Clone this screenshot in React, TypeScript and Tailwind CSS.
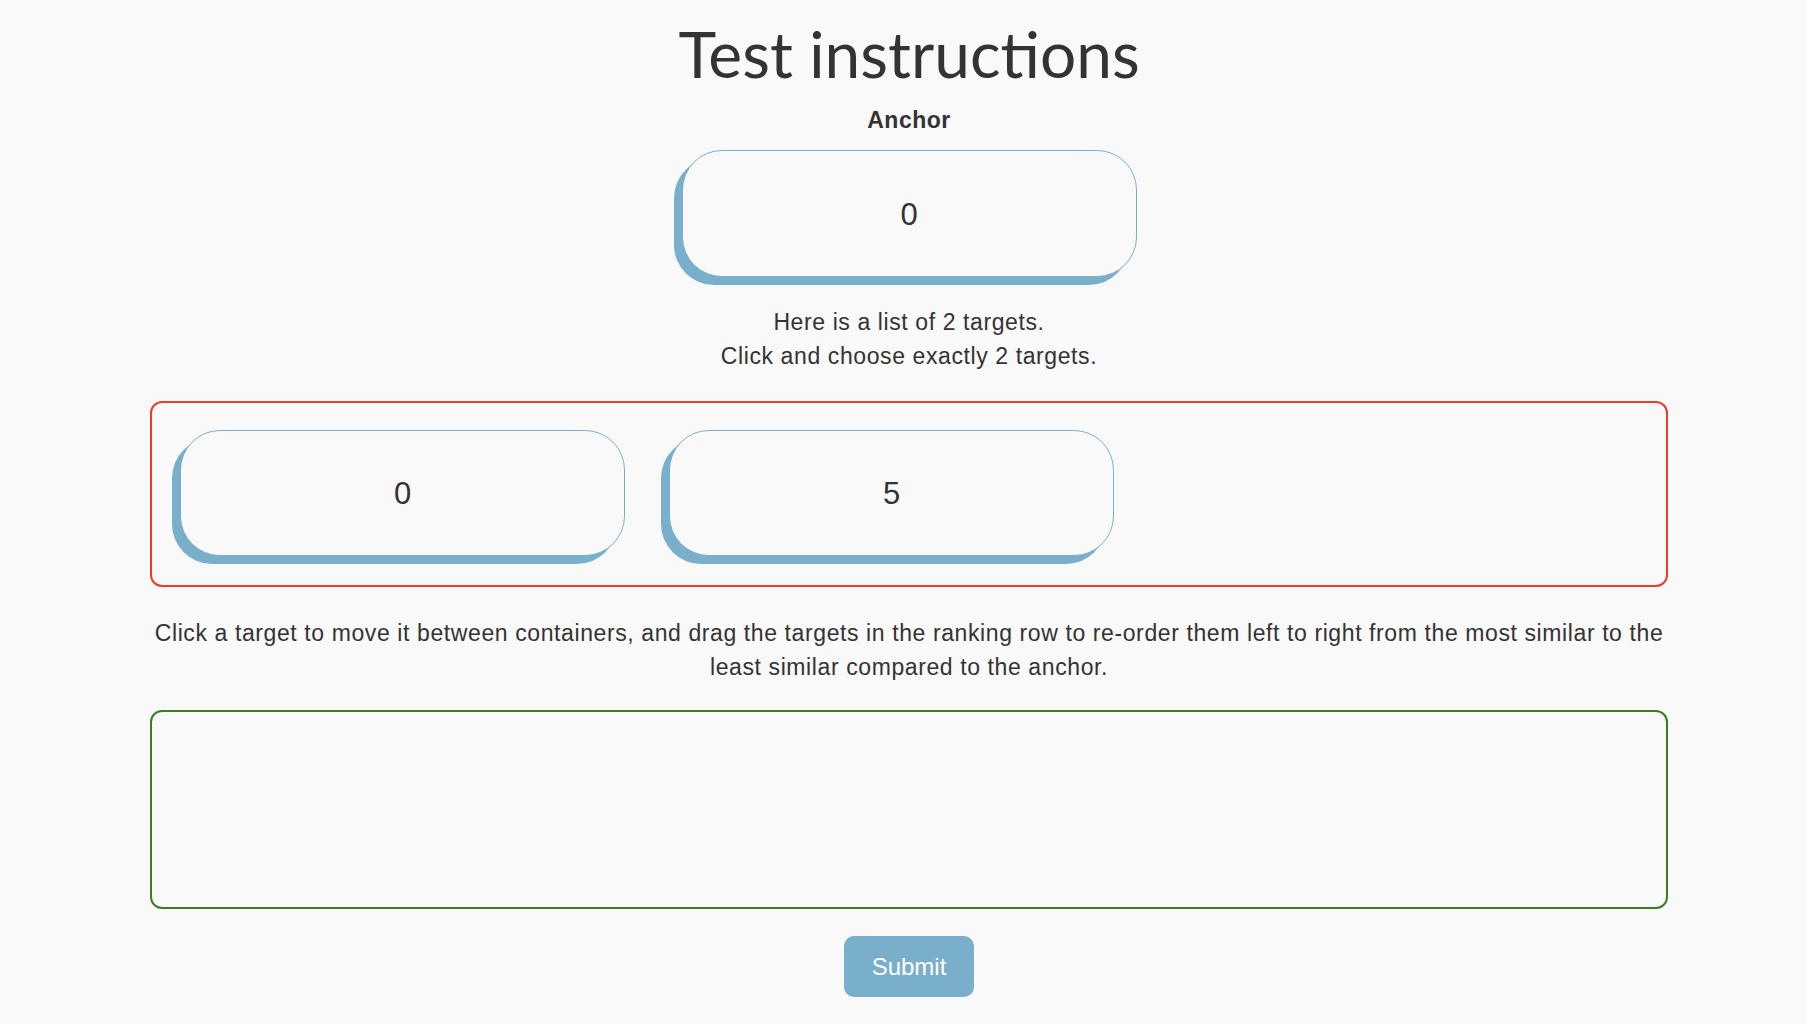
import * as React from "react";

const targets = ["0", "5"];

function Card({ label, className }: { label: string; className?: string }) {
  return (
    <div
      className={
        "flex items-center justify-center rounded-[40px] border border-[#7aafcc] bg-[#f9f9f9] pt-[3px] shadow-[-8px_8px_0_0_#7aafcc] text-[31px] text-[#333333] " +
        (className ?? "")
      }
    >
      {label}
    </div>
  );
}

export default function App() {
  return (
    <div className="min-h-screen bg-[#f9f9f9] font-['Liberation_Sans',Arial,sans-serif] text-[#333333]">
      <div className="ml-[150px] flex w-[1518px] flex-col items-center pb-[27px]">
        {/* Title */}
        <h1 className="mt-[22px] font-['Lato',sans-serif] text-[64px] leading-[64px] font-normal">
          Test instructions
        </h1>

        {/* Anchor */}
        <div className="mt-[23px] text-[23px] leading-[22px] font-bold tracking-[0.5px]">Anchor</div>
        <Card label="0" className="mt-[19px] h-[127px] w-[455px]" />

        <p className="mt-[28px] text-center text-[23px] leading-[34px] tracking-[0.6px]">
          Here is a list of 2 targets.
          <br />
          Click and choose exactly 2 targets.
        </p>

        {/* Target pool */}
        <div className="mt-[28px] flex h-[186px] w-full gap-[44px] rounded-[12px] border-2 border-[#ec3b2a] pt-[27px] pl-[28px]">
          {targets.map((t) => (
            <Card key={t} label={t} className="h-[126px] w-[445px]" />
          ))}
        </div>

        <p className="mt-[29px] text-center text-[23px] leading-[34px] tracking-[0.6px]">
          Click a target to move it between containers, and drag the targets in the ranking row to re-order them left to
          right from the most similar to the least similar compared to the anchor.
        </p>

        {/* Ranking row */}
        <div className="mt-[26px] h-[199px] w-full rounded-[12px] border-2 border-[#3a7d23]" />

        <button
          type="button"
          className="mt-[27px] flex h-[61px] w-[130px] items-center justify-center rounded-[10px] bg-[#7aafcc] text-[24px] text-white"
        >
          Submit
        </button>
      </div>
    </div>
  );
}
